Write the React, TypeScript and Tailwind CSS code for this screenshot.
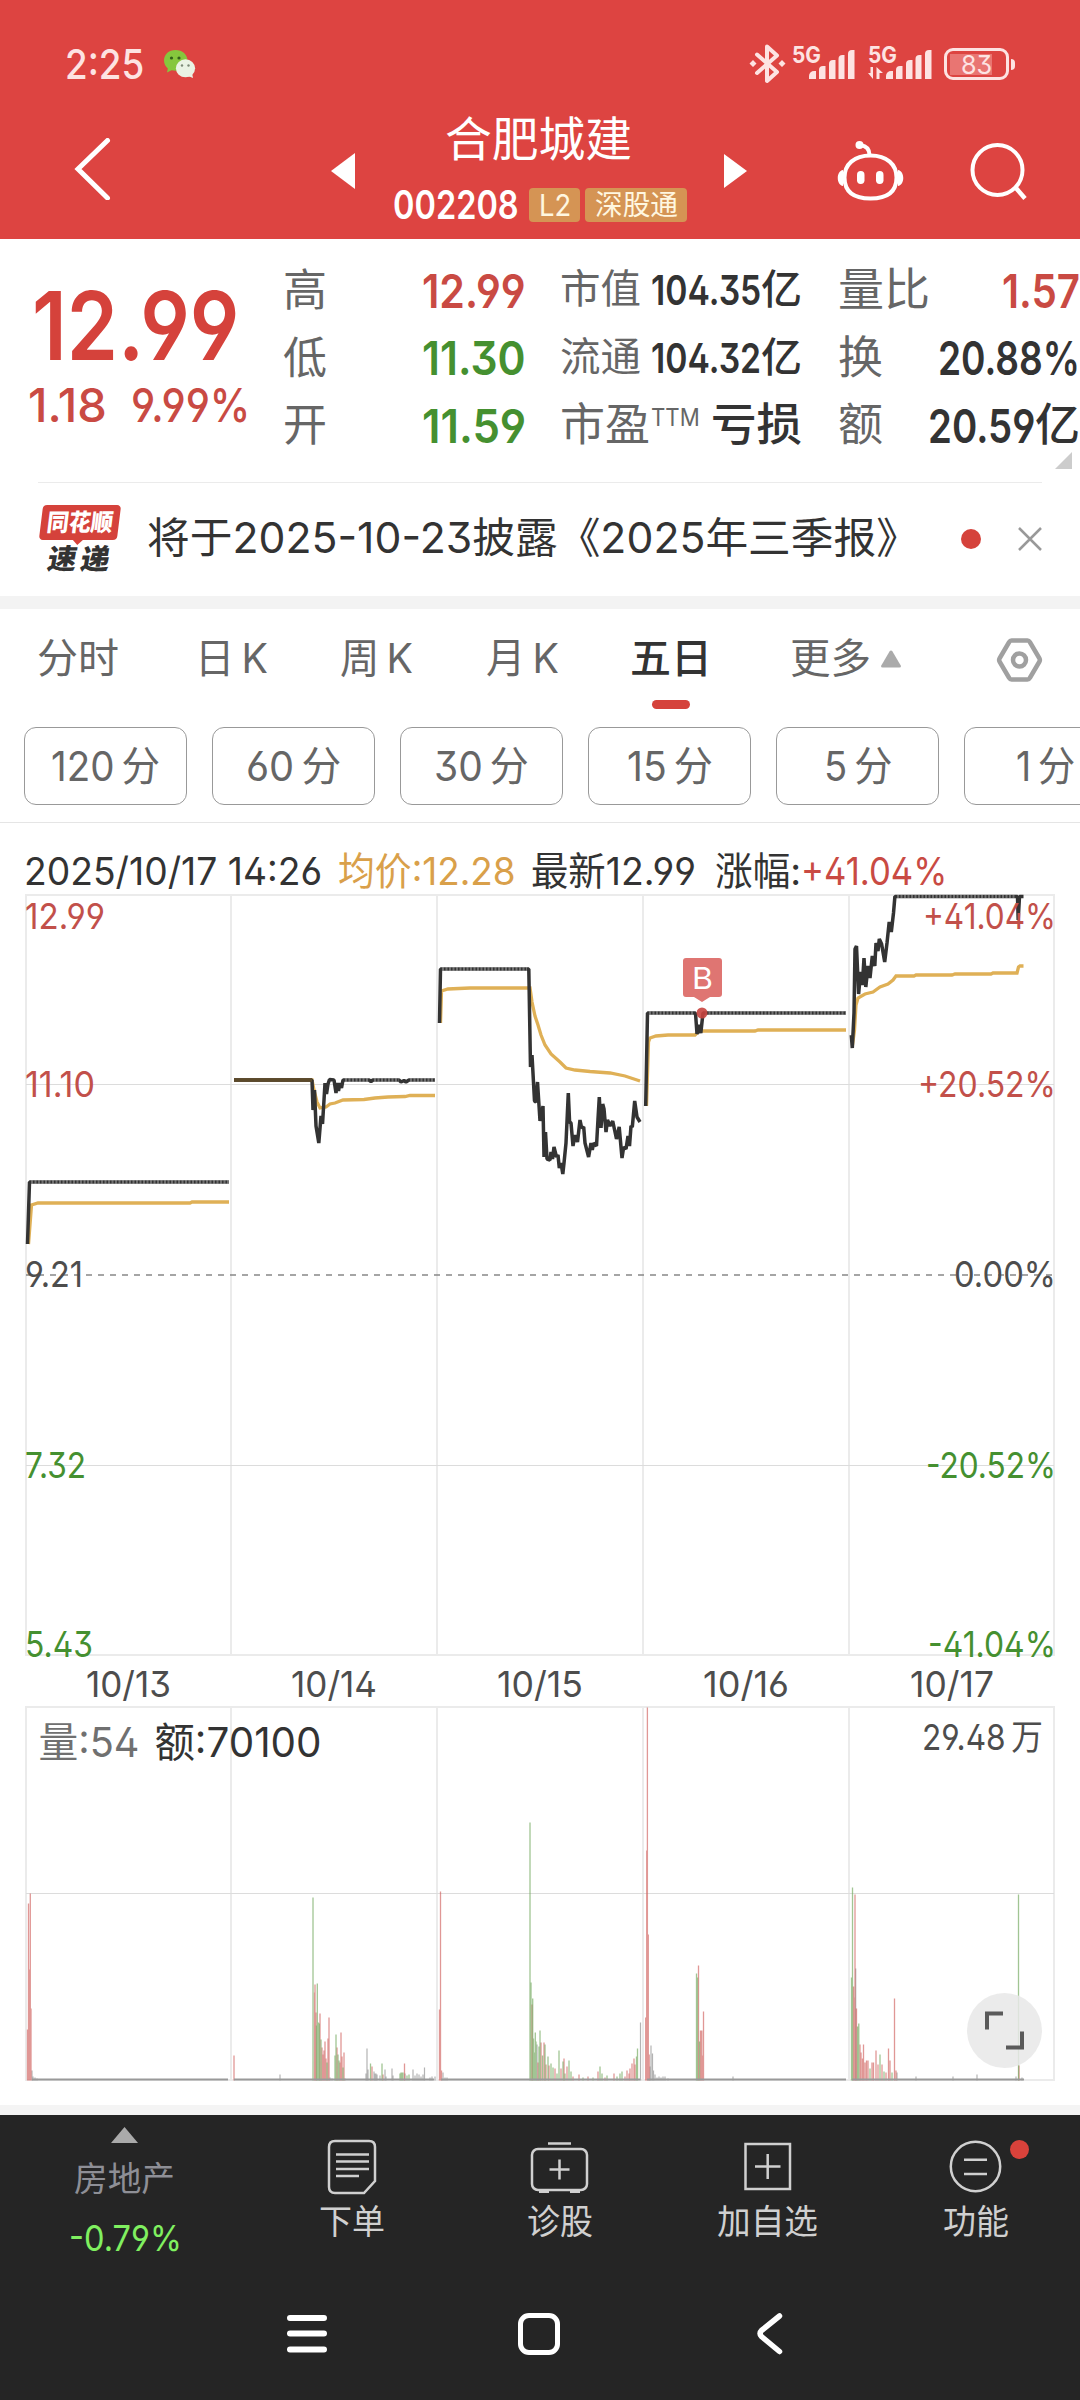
import React, { useEffect, useRef } from "react";
import clsx from "clsx";

type FitTextProps = {
  className?: string;
  children: React.ReactNode;
};

// Stretches or squeezes one line of text to the width of its box
function FitText({ className, children }: FitTextProps) {
  const box = useRef<HTMLDivElement>(null);
  const text = useRef<HTMLSpanElement>(null);

  useEffect(() => {
    const boxEl = box.current;
    const textEl = text.current;
    if (!boxEl || !textEl) return;

    const fit = () => {
      if (!textEl.offsetWidth) return;
      textEl.style.transform = `scaleX(${boxEl.clientWidth / textEl.offsetWidth})`;
    };

    fit();
    const observer = new ResizeObserver(fit);
    observer.observe(boxEl);
    observer.observe(textEl);
    return () => observer.disconnect();
  }, [children]);

  return (
    <div ref={box} className={clsx("shrink-0 whitespace-nowrap", className)}>
      <span ref={text} className="inline-block origin-left">
        {children}
      </span>
    </div>
  );
}

function SignalBars() {
  return (
    <svg width="46" height="31" viewBox="0 0 46 31" fill="#fde3e2">
      <path d="M0 30v-3a5 5 0 0 1 5-5h2v8z" />
      <path d="M10 30v-9a4 4 0 0 1 4-4h2.5v13z" />
      <path d="M20 30V15a4 4 0 0 1 4-4h2.5v19z" />
      <path d="M29.5 30V10a4 4 0 0 1 4-4H35.500v24z" />
      <path d="M39 30V5a4 4 0 0 1 4-4h2.500v29z" />
    </svg>
  );
}

function StatusBar() {
  return (
    <div className="flex h-[88px] items-center pt-10 text-[#fde3e2]">
      <FitText className="ml-[65px] w-[79px] text-[41px] leading-[48px] font-medium">2:25</FitText>
      <svg className="ml-[19px]" width="34" height="30" viewBox="0 0 34 30">
        <path d="M12.500 1C5.500 1 1 5.800 1 11.500c0 3.300 1.500 6 3.800 8L4 23.500l4.500-2.300c9 2 16-2.700 16-9.700C24.500 5.800 19.500 1 12.500 1z" fill="#86c73d" />
        <ellipse cx="22.500" cy="19.300" rx="9.600" ry="9" fill="#eaf3e4" />
        <path d="M25 27l5 2-1-5z" fill="#eaf3e4" />
        <circle cx="8.500" cy="9" r="1.600" fill="#33611a" />
        <circle cx="16" cy="9" r="1.600" fill="#33611a" />
        <circle cx="19" cy="16.500" r="1.200" fill="#7d8a77" />
        <circle cx="25.500" cy="16.500" r="1.200" fill="#7d8a77" />
      </svg>
      <svg className="ml-auto" width="37" height="40" viewBox="0 0 37 40" fill="none" stroke="#fde3e2" strokeWidth="4" strokeLinejoin="round" strokeLinecap="round">
        <path d="M8 10.500l20 17.500-10 9V2.500l10 9L8 29" />
        <path d="M4 16l3.500 3.500L4 23 .5 19.500zM33 16l3.500 3.500L33 23l-3.500-3.500z" fill="#fde3e2" stroke="none" />
      </svg>
      <div className="ml-[6px] flex h-8 items-start">
        <FitText className="-mt-[3px] w-[29px] text-[23px] leading-[20px] font-bold">5G</FitText>
        <div className="-ml-[12px] pt-[1px]">
          <SignalBars />
        </div>
      </div>
      <div className="ml-[13px] flex h-8 items-start">
        <div className="w-[30px]">
          <FitText className="-mt-[3px] w-[29px] text-[23px] leading-[20px] font-bold">5G</FitText>
          <svg className="mt-[2px]" width="16" height="12" viewBox="0 0 16 12" fill="#fde3e2">
            <path d="M5 0v12L0 6h2.500V0zM8.500 12V0l6.500 6h-3.500v6z" />
          </svg>
        </div>
        <div className="-ml-[12px] pt-[1px]">
          <SignalBars />
        </div>
      </div>
      <div className="ml-3 flex h-8 w-[65px] items-center justify-center rounded-[9px] border-[3px] border-[#fde3e2]">
        <div className="flex h-[21px] w-[53px] bg-linear-to-r from-[#e97572] from-80% to-transparent to-80% pl-[11px]">
          <FitText className="w-[31px] text-[26px] leading-[21px]">83</FitText>
        </div>
      </div>
      <div className="mr-[65px] ml-[2px] h-[11px] w-1 rounded-r bg-[#fde3e2]" />
    </div>
  );
}

function TitleBar() {
  return (
    <div className="flex h-[151px] items-start text-white">
      <svg className="mt-[50px] ml-[73px]" width="38" height="62" viewBox="0 0 38 62" fill="none" stroke="#fff" strokeWidth="5">
        <path d="M34.500 2.500L5 31l29.500 29" strokeLinecap="round" />
      </svg>
      <svg className="mt-[65px] ml-[220px]" width="24" height="36" viewBox="0 0 24 36" fill="#fff">
        <path d="M24 0v36L0 18z" />
      </svg>
      <div className="ml-[38px] w-[294px]">
        <FitText className="mt-[26px] ml-[52px] w-[187px] text-[47px] leading-[50px]">合肥城建</FitText>
        <div className="mt-[24px] flex items-center">
          <FitText className="w-[126px] text-[40px] leading-[34px] font-semibold">002208</FitText>
          <div className="ml-[10px] flex h-[34px] w-[51px] items-center justify-center rounded-[4px] bg-[#d59454] text-[#fff7e0]">
            <FitText className="w-[32px] text-[30px] leading-[34px]">L2</FitText>
          </div>
          <div className="ml-[5px] flex h-[34px] w-[102px] items-center justify-center rounded-[4px] bg-[#d59454] text-[#fff7e0]">
            <FitText className="w-[83px] text-[28px] leading-[34px]">深股通</FitText>
          </div>
        </div>
      </div>
      <svg className="mt-[66px] ml-[37px]" width="23" height="34" viewBox="0 0 23 34" fill="#fff">
        <path d="M0 0v34l23-17z" />
      </svg>
      <svg className="mt-[52px] ml-[90px]" width="67" height="62" viewBox="0 0 67 62" fill="none" stroke="#fff" strokeWidth="4">
        <path d="M33.500 15.500c16.500 0 26 9 26 22s-7 21-26 21-26-8-26-21 9.500-22 26-22z" />
        <path d="M32.500 15c0-5-3-9-9-10" />
        <circle cx="22.500" cy="5" r="4" fill="#fff" stroke="none" />
        <path d="M6 30c-7 1-7 15 0 16zM61 30c7 1 7 15 0 16z" fill="#fff" stroke="none" />
        <rect x="20" y="31" width="7.500" height="13" rx="3.700" fill="#fff" stroke="none" />
        <rect x="39" y="31" width="7.500" height="13" rx="3.700" fill="#fff" stroke="none" />
      </svg>
      <svg className="mt-[54px] ml-[66px]" width="58" height="60" viewBox="0 0 58 60" fill="none" stroke="#fff" strokeWidth="4">
        <circle cx="27.500" cy="28" r="25" />
        <path d="M45.500 45.500L55 56.500" strokeWidth="4.500" />
      </svg>
    </div>
  );
}

function QuotePanel() {
  return (
    <div className="relative flex h-[243px] pt-[17px] text-[47px] leading-[68px]">
      <div className="w-[283px] shrink-0 text-[#d5423b]">
        <FitText className="mt-[30px] ml-[32px] h-[80px] w-[208px] text-[95px] leading-[80px] font-semibold">12.99</FitText>
        <div className="mt-[14px] flex leading-[50px] text-[#c94a43]">
          <FitText className="ml-[28px] w-[79px] font-medium">1.18</FitText>
          <FitText className="ml-[24px] w-[119px] font-medium">9.99%</FitText>
        </div>
      </div>
      <div className="w-[243px] shrink-0 font-semibold">
        <div className="flex h-[68px] justify-between">
          <span className="text-[44px] font-normal text-[#666]">高</span>
          <FitText className="mt-[1px] w-[104px] text-[#c94a43]">12.99</FitText>
        </div>
        <div className="flex h-[68px] justify-between">
          <span className="text-[44px] font-normal text-[#666]">低</span>
          <FitText className="w-[104px] text-[#459030]">11.30</FitText>
        </div>
        <div className="flex h-[68px] justify-between">
          <span className="-mt-[1px] text-[44px] font-normal text-[#666]">开</span>
          <FitText className="w-[104px] text-[#459030]">11.59</FitText>
        </div>
      </div>
      <div className="ml-[34px] w-[242px] shrink-0 text-[#333]">
        <div className="flex h-[68px] justify-between text-[41px]">
          <FitText className="-mt-[1px] w-[81px] text-[40px] text-[#666]">市值</FitText>
          <div className="flex">
            <FitText className="w-[110px] font-semibold">104.35</FitText>
            <FitText className="-mt-[1px] w-[41px] font-medium">亿</FitText>
          </div>
        </div>
        <div className="flex h-[68px] justify-between text-[41px]">
          <FitText className="-mt-[1px] w-[81px] text-[40px] text-[#666]">流通</FitText>
          <div className="flex">
            <FitText className="w-[110px] font-semibold">104.32</FitText>
            <FitText className="-mt-[1px] w-[41px] font-medium">亿</FitText>
          </div>
        </div>
        <div className="flex h-[68px] text-[45px]">
          <FitText className="-mt-[1px] w-[90px] text-[#666]">市盈</FitText>
          <FitText className="-mt-[8px] ml-[1px] w-[49px] text-[24px] text-[#666]">TTM</FitText>
          <FitText className="-mt-[1px] ml-auto w-[91px] font-medium">亏损</FitText>
        </div>
      </div>
      <div className="ml-[36px] w-[242px] shrink-0 font-semibold text-[#333]">
        <div className="flex h-[68px] justify-between">
          <FitText className="w-[92px] text-[45px] font-normal text-[#666]">量比</FitText>
          <FitText className="mt-[1px] w-[78px] text-[#c94a43]">1.57</FitText>
        </div>
        <div className="flex h-[68px] justify-between">
          <span className="text-[45px] font-normal text-[#666]">换</span>
          <FitText className="w-[142px]">20.88%</FitText>
        </div>
        <div className="flex h-[68px] justify-between">
          <span className="-mt-[1px] text-[45px] font-normal text-[#666]">额</span>
          <div className="flex">
            <FitText className="w-[107px]">20.59</FitText>
            <FitText className="-mt-[1px] w-[45px] text-[45px] font-medium">亿</FitText>
          </div>
        </div>
      </div>
      <svg className="absolute top-[213px] left-[1055px]" width="17" height="17" fill="#ccc">
        <path d="M17 0v17H0z" />
      </svg>
    </div>
  );
}

function NewsBar() {
  return (
    <div className="mx-[38px] flex h-[114px] border-t border-[#ebebeb]">
      <div className="mt-[22px] w-[84px]">
        <div className="relative ml-[3px] h-[35px] w-[78px] -skew-x-[7deg] rounded-[4px] bg-[#d5423b] pl-[6px] text-white">
          <FitText className="w-[66px] text-[24px] leading-[35px] font-black">同花顺</FitText>
          <svg className="absolute top-[34px] left-[33px]" width="12" height="7" fill="#d5423b">
            <path d="M0 0h12L6 6z" />
          </svg>
        </div>
        <FitText className="mt-[5px] ml-[10px] w-[62px] -skew-x-[10deg] text-[28px] leading-[29px] font-black text-[#333]">速&thinsp;递</FitText>
      </div>
      <FitText className="mt-[24px] ml-[25px] w-[772px] text-[42.5px] leading-[62px] text-[#333]">
        将于2025-10-23披露《2025年三季报》
      </FitText>
      <div className="mt-[46px] ml-[42px] size-[20px] rounded-full bg-[#d5423b]" />
      <svg className="mt-[44px] ml-auto" width="24" height="24" stroke="#999" strokeWidth="2.500">
        <path d="M1 1l22 22M23 1L1 23" />
      </svg>
    </div>
  );
}

function PeriodTabs() {
  return (
    <div className="flex h-[118px] text-[41px] leading-[98px] text-[#666]">
      <FitText className="ml-[37px] w-[82px]">分时</FitText>
      <FitText className="ml-[76px] w-[73px]">日&thinsp;K</FitText>
      <FitText className="ml-[72px] w-[73px]">周&thinsp;K</FitText>
      <FitText className="ml-[73px] w-[73px]">月&thinsp;K</FitText>
      <div className="ml-[71px] w-[82px] font-medium text-[#333]">
        <FitText className="h-[91px] w-[82px]">五日</FitText>
        <div className="mx-auto h-[9px] w-[38px] rounded-full bg-[#d5423b]" />
      </div>
      <FitText className="ml-[78px] w-[81px]">更多</FitText>
      <svg className="mt-[41px] ml-[10px]" width="20" height="18" fill="#aaa">
        <path d="M8.500 1.500q1.500-2 3 0L20 16q0 1.500-1.500 1.500h-17Q0 17.500 0 16z" />
      </svg>
      <svg className="mt-[28px] ml-[95px]" width="47" height="46" viewBox="0 0 47 46" fill="none" stroke="#a0a0a0" strokeWidth="4.500" strokeLinejoin="round">
        <path d="M15.500 3.500h16q1.500 0 2.300 1.500L43.500 21.500q.8 1.500 0 3L33.800 41q-.8 1.500-2.300 1.500h-16q-1.500 0-2.300-1.500L3.500 24.500q-.8-1.500 0-3L13.200 5q.8-1.500 2.300-1.500z" />
        <circle cx="23.500" cy="23" r="6.500" />
      </svg>
    </div>
  );
}

function MinuteChips() {
  const chip = "flex h-[78px] w-[163px] shrink-0 justify-center rounded-[12px] border border-[#999]";
  return (
    <div className="flex h-[96px] gap-[25px] overflow-hidden border-b border-[#e5e5e5] pl-[24px] text-[41px] leading-[76px] text-[#666]">
      <div className={chip}>
        <FitText className="w-[109px]">120&thinsp;分</FitText>
      </div>
      <div className={chip}>
        <FitText className="w-[95px]">60&thinsp;分</FitText>
      </div>
      <div className={chip}>
        <FitText className="w-[95px]">30&thinsp;分</FitText>
      </div>
      <div className={chip}>
        <FitText className="w-[86px]">15&thinsp;分</FitText>
      </div>
      <div className={chip}>
        <FitText className="w-[68px]">5&thinsp;分</FitText>
      </div>
      <div className={chip}>
        <FitText className="w-[59px]">1&thinsp;分</FitText>
      </div>
    </div>
  );
}

function ChartLegend() {
  return (
    <div className="flex h-[67px] pt-[28px] text-[38.5px] leading-[40px] text-[#333]">
      <FitText className="ml-[24px] w-[298px]">2025/10/17 14:26</FitText>
      <FitText className="ml-[16px] w-[178px] text-[#d9a04a]">均价:12.28</FitText>
      <FitText className="ml-[15px] w-[165px]">最新12.99</FitText>
      <FitText className="ml-[19px] w-[86px]">涨幅:</FitText>
      <FitText className="w-[146px] text-[#c94a43]">+41.04%</FitText>
    </div>
  );
}

const priceLines = [
  "27.5,1244 29.5,1182 229,1182",
  "234,1080 312,1080 313,1110 314.5,1090 316,1126 318.8,1143 321,1116 322.5,1124 324,1100 325,1083 326.5,1094 328,1084 329.5,1079.5 334,1080 336,1093 337,1083 338.5,1091 340,1083 341.5,1088 343,1080 369,1080 371,1081.5 373,1080 399,1080 401,1082 404,1080.5 406,1082 409,1080 435,1080",
  "439.5,1023 440.5,969 528.8,969 530.5,1067 532,1055 534.5,1101 536,1102 537.5,1082 540,1121 543,1106 544,1157 545.5,1132 547,1159 550,1160 551,1152 552.5,1159 554,1147 556.5,1157 558,1155 559.3,1168 561,1163 562.8,1174 564,1163 566,1143 568.3,1093 569.6,1122 571,1123 573,1146 575,1135 577.5,1142 580,1120 581.7,1128 583.7,1127 585,1143 588.6,1157 591,1143 592.3,1150 593.7,1143 596.5,1146 598,1119 599.3,1097 601,1128 602.7,1104 604,1109 606,1132 607.5,1120 610,1126 612.7,1121 616.5,1139 619.2,1127 622,1158 623.7,1147 626,1149 628,1136 629.5,1146 631,1126 632.3,1127 634.7,1101 637,1117 640,1122",
  "645.7,1106 647.5,1013 695.5,1013 697,1034 699,1025 700.8,1033 703,1013 846,1013",
  "851.3,1035 852.3,1048 854,1013 855,949 856.5,946 858.6,994 860.6,972 862.3,985 864,958 865.8,987 868,966 870,978 872.3,956 874.8,966 876,943 878,951 879.3,939 881.6,944 884.7,962 887,943 889.2,922 891.3,932 893.5,913 894.9,896.5 1017.5,896.5 1018.2,920 1019.5,896.5 1023.5,896.5",
];

const averageLines = [
  "28.5,1244 31.5,1205 38,1203 190,1203 192,1202 229,1202",
  "234,1080 312,1080 314,1090 317,1102 320,1108 326,1107 330,1104 335,1103 343,1100 364,1099.5 375,1098 388,1097 405,1096.5 410,1095.5 435,1095.5",
  "440.5,1023 441.5,991 448,989 470,988 530,988 532,1002 535,1016 538,1025 541,1035 545,1045 551,1054 560,1062 566,1068 575,1070 590,1071.5 610,1073 625,1076 640,1081",
  "646.5,1106 648.5,1042 650,1038 656,1036 668,1035 695,1035 698,1032 702,1031 755,1031 758,1030 846,1030",
  "852.5,1045 854.5,1030 856,1005 858,998 865,994 873,992 880,987 888,984 893,980 896,976 914,976 916,975 952,975 955,974 991,974 993,973 1017,973 1018.5,967 1020,966 1023.5,966",
];

// "x:height" pairs, measured up from the base line of the volume chart
const volume = {
  up: "27.5:51 28.5:177 29.5:111 30.3:187 31:72 234:25 314.5:88 315:96 316:68 320:67 322:33 323:26 324:30 325:39 326:22 328:42 329:63 337:33 340:18 341:48 342:24 344:28 372:14 383:6 404.5:17 439.5:71 440.5:189 441.5:10 532:76 538:18 541:38 544:38 546:16 549:15 555:12 561:12 564:22 567:14 573:4 579:6 588:4 598:9 605:3 614:7 625:4 627:10 629:7 630:12 632:17 634:22 635:16 645.7:63 646.7:230 647.4:373 648.3:146 649.2:26 698.5:115 700.5:50 701.8:50 702.5:25 703.5:69 853.5:94 854.3:83 855:186 856.5:72 860:36 861:28 862.5:22 863.5:36 865:18 866.5:20 868:20 872:18 873.5:18 876:30 878:16 882:16 886:8 888.5:32 890:20 894.5:82 896:10 1019:15",
  down: "313:183 316.5:55 317.3:97 318.5:58 319.3:57 321:41 327:18 335:25 336:46 338:26 339:20 343:13 370.5:17 382:17 400:7 401:8 402:8 403:8 407:5 409:6 530:258 531:98 532.7:82 533.5:42 534.5:28 535.3:48 536:39 539:34 540:50 542.5:25 545:36 548:24 551:17 553:13 557:7 559:30 563:19 565:7 569:20 571:9 583:3 593:3 600:14 602:7 607:5 617:4 620:7 622:9 636.5:24 637.5:32 696.5:107 697.5:103 699.5:39 851.5:103 852.5:193 857.5:54 858.8:57 870:12 880:26 884:9 892:8 1018.5:186",
  flat: "32:10 33:4 35:3 37:2 280:6 330:3 332:2 345:2 366:7 367:32 368:11 374:9 375:7 376:7 377:6 380:5 385:11 386:4 392:12 393:5 405:7 413:11 415:5 417:7 419:6 421:4 423:6 424.5:13 430:3 432:4 435:4 443:8 445:3 447:3 537:36 640.5:58 650:14 651:35 652.5:27 653.5:10 655:6 657:3 659:4 661:3 663:4 665:4 668:2 733:4 855.7:112 897:8 916:4 953:4 977:6 1016:4 1022:3",
};

function bars(data: string) {
  return data
    .split(" ")
    .map((pair) => {
      const [x, height] = pair.split(":");
      return `M${x} 2080.5v-${height}`;
    })
    .join("");
}

function Charts() {
  return (
    <div className="relative h-[1215px]">
      <svg className="block" width="1080" height="1215" viewBox="0 890 1080 1215" fill="none" fontSize="35.5">
        <g stroke="#ebebeb" strokeWidth="2">
          <path d="M26 895h1028v760H26zM231 895v760M437 895v760M643 895v760M849 895v760" />
          <path d="M26 1707h1028v373H26zM231 1707v373M437 1707v373M643 1707v373M849 1707v373" />
        </g>
        <path d="M26 1084.500h1028M26 1465.500h1028M26 1893.500h1028" stroke="#dcdcdc" />
        <path d="M26 1275h1028" stroke="#888" strokeWidth="1.500" strokeDasharray="6 6" />

        <path d={bars(volume.flat)} stroke="#999" strokeOpacity="0.75" strokeWidth="1.200" />
        <path d={bars(volume.up)} stroke="#d0605c" strokeOpacity="0.65" strokeWidth="1.300" />
        <path d={bars(volume.down)} stroke="#6ea659" strokeOpacity="0.65" strokeWidth="1.300" />
        <path d="M32 2079.500H228M234 2079.500H434M441 2079.500H640M647 2079.500H846M852 2079.500H1024" stroke="#999" strokeWidth="2" />

        {averageLines.map((points) => (
          <polyline key={points} points={points} stroke="#dfb056" strokeWidth="3.300" />
        ))}
        {priceLines.map((points) => (
          <polyline key={points} points={points} stroke="#333" strokeWidth="3.500" strokeLinejoin="bevel" />
        ))}
        {/* limit-up stretches are drawn with a fine dotted texture */}
        <path
          d="M31 1182H229M345 1080H369M374 1080H399M410 1080H435M442 969H527M649 1013H694M705 1013H846M897 896.500H1016"
          stroke="#fff"
          strokeOpacity="0.3"
          strokeWidth="3.500"
          strokeDasharray="2 1.500"
        />
        <path d="M234 1080h78" stroke="#5c4a2a" strokeWidth="3.500" />

        <circle cx="702" cy="1013" r="5.500" fill="#c8443f" fillOpacity="0.9" />
        <path d="M686 958h33q3 0 3 3v33q0 3-3 3h-9l-8 5-8-5h-8q-3 0-3-3v-33q0-3 3-3z" fill="#df7572" />
        <text x="692" y="988.500" fontSize="30" fill="#fff" textLength="21" lengthAdjust="spacingAndGlyphs">B</text>

        <g fill="#c2504a">
          <text x="25" y="929" textLength="80" lengthAdjust="spacingAndGlyphs">12.99</text>
          <text x="25" y="1097" textLength="70" lengthAdjust="spacingAndGlyphs">11.10</text>
          <text x="923" y="929" textLength="133" lengthAdjust="spacingAndGlyphs">+41.04%</text>
          <text x="918" y="1097" textLength="138" lengthAdjust="spacingAndGlyphs">+20.52%</text>
        </g>
        <g fill="#4d4d4d">
          <text x="25" y="1287" textLength="58" lengthAdjust="spacingAndGlyphs">9.21</text>
          <text x="954" y="1287" textLength="102" lengthAdjust="spacingAndGlyphs">0.00%</text>
          <text x="86" y="1697" textLength="85" lengthAdjust="spacingAndGlyphs">10/13</text>
          <text x="291" y="1697" textLength="86" lengthAdjust="spacingAndGlyphs">10/14</text>
          <text x="497" y="1697" textLength="86" lengthAdjust="spacingAndGlyphs">10/15</text>
          <text x="703" y="1697" textLength="86" lengthAdjust="spacingAndGlyphs">10/16</text>
          <text x="910" y="1697" textLength="84" lengthAdjust="spacingAndGlyphs">10/17</text>
          <text x="922" y="1750" textLength="121" lengthAdjust="spacingAndGlyphs">29.48&thinsp;万</text>
        </g>
        <g fill="#459030">
          <text x="25" y="1478" textLength="61" lengthAdjust="spacingAndGlyphs">7.32</text>
          <text x="25" y="1657" textLength="68" lengthAdjust="spacingAndGlyphs">5.43</text>
          <text x="926" y="1478" textLength="130" lengthAdjust="spacingAndGlyphs">-20.52%</text>
          <text x="928" y="1657" textLength="128" lengthAdjust="spacingAndGlyphs">-41.04%</text>
        </g>
        <g fontSize="41">
          <text x="38.500" y="1757" fill="#707070" textLength="101" lengthAdjust="spacingAndGlyphs">量:54</text>
          <text x="154.500" y="1757" fill="#333" textLength="167" lengthAdjust="spacingAndGlyphs">额:70100</text>
        </g>
      </svg>
      <button className="absolute top-[1103px] left-[967px] size-[75px] rounded-full bg-[#e8e8e8]/85">
        <svg width="75" height="75" viewBox="0 0 75 75" fill="none" stroke="#5a5a5a" strokeWidth="4">
          <path d="M20 36.500V20.500h16M55 38.500v16H39" />
        </svg>
      </button>
    </div>
  );
}

function BottomBar() {
  return (
    <div className="flex h-[155px] text-[34px] leading-[40px] text-[#d0d0d0]">
      <div className="ml-[69px] w-[113px] shrink-0">
        <svg className="mt-[12px] ml-[42px]" width="27" height="16" fill="#aaa">
          <path d="M13.500 0L27 16H0z" />
        </svg>
        <FitText className="mt-[16px] ml-[5px] w-[101px] text-[#8e8f96]">房地产</FitText>
        <FitText className="mt-[19px] w-[113px] text-[36px] text-[#80f060]">-0.79%</FitText>
      </div>
      <div className="ml-[137px] w-[66px] shrink-0">
        <svg className="mt-[24px] ml-[8px]" width="51" height="56" viewBox="0 0 51 56" fill="none" stroke="#d0d0d0" strokeWidth="2.500">
          <path d="M8 2h34q6 0 6 6v34L37 54H8q-6 0-6-6V8q0-6 6-6z" />
          <path d="M9 15.500h33M9 22.500h33M9 30h33M9 37h23" />
        </svg>
        <FitText className="mt-[7px] w-[66px]">下单</FitText>
      </div>
      <div className="ml-[142px] w-[66px] shrink-0">
        <svg className="mt-[26px] ml-[3px]" width="59" height="54" viewBox="0 0 59 54" fill="none" stroke="#d0d0d0" strokeWidth="2.500">
          <rect x="2" y="8" width="55" height="41" rx="6" />
          <path d="M18 2.500h23M19.500 28.500h20M29.500 18.500v20" />
          <path d="M9 50.500h10M40 50.500h10" strokeWidth="3" />
        </svg>
        <FitText className="mt-[7px] w-[66px]">诊股</FitText>
      </div>
      <div className="ml-[124px] w-[101px] shrink-0">
        <svg className="mt-[27px] ml-[27px]" width="49" height="50" viewBox="0 0 49 50" fill="none" stroke="#d0d0d0" strokeWidth="2.500">
          <rect x="1.500" y="2" width="44.500" height="45" />
          <path d="M11 24.500h25.500M23.700 12v25" />
        </svg>
        <FitText className="mt-[10px] w-[101px]">加自选</FitText>
      </div>
      <div className="relative ml-[125px] w-[66px] shrink-0">
        <svg className="mt-[25px] ml-[6px]" width="54" height="54" viewBox="0 0 54 54" fill="none" stroke="#d0d0d0" strokeWidth="2.500">
          <circle cx="26.500" cy="26.500" r="24.700" />
          <path d="M15 19.700h23M15 34h23" />
        </svg>
        <FitText className="mt-[8px] w-[66px]">功能</FitText>
        <span className="absolute top-[25px] left-[67px] size-[19px] rounded-full bg-[#d9423b]" />
      </div>
    </div>
  );
}

function SystemNav() {
  return (
    <div className="flex h-[130px] items-start pt-[42px]">
      <svg className="ml-[286px]" width="42" height="44" stroke="#fff" strokeWidth="6" strokeLinecap="round">
        <path d="M4 6h34M4 21.500h34M4 37.500h34" />
      </svg>
      <div className="mt-[1px] ml-[190px] size-[42px] rounded-[11px] border-[5px] border-white" />
      <svg className="ml-[194px]" width="32" height="44" fill="none" stroke="#fff" strokeWidth="5.500" strokeLinecap="round" strokeLinejoin="round">
        <path d="M25.500 4L7.500 18.500q-3 3 0 6L25.500 39.500" />
      </svg>
    </div>
  );
}

export default function App() {
  return (
    <div className="h-[2400px] w-[1080px] overflow-hidden bg-white font-['Inter','Noto_Sans_CJK_SC',sans-serif] [font-feature-settings:'ss01','cv09']">
      <header className="bg-[#dd4441]">
        <StatusBar />
        <TitleBar />
      </header>
      <QuotePanel />
      <NewsBar />
      <div className="h-[13px] bg-[#f3f3f3]" />
      <PeriodTabs />
      <MinuteChips />
      <ChartLegend />
      <Charts />
      <footer className="border-t-[10px] border-[#f4f4f4] bg-[#252525]">
        <BottomBar />
        <SystemNav />
      </footer>
    </div>
  );
}
